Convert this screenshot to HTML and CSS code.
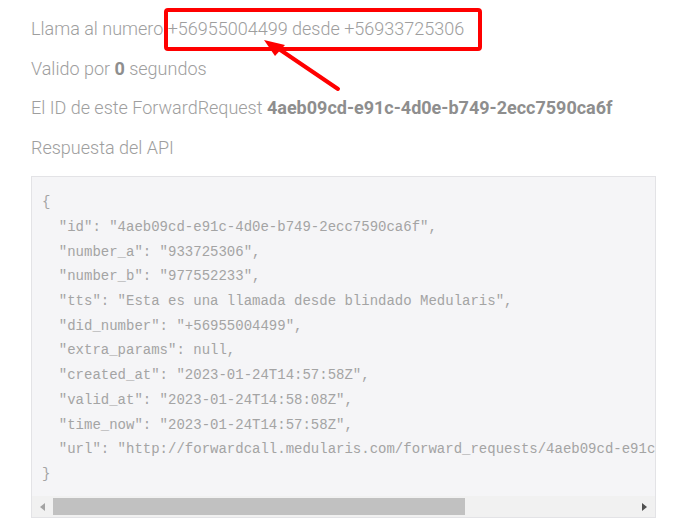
FILE: index.html
```html
<!DOCTYPE html>
<html>
<head>
<meta charset="utf-8">
<title>ForwardRequest</title>
<link rel="stylesheet" href="styles.css">
</head>
<body>
    <div class="info">
        <div class="line">Llama al numero +56955004499 desde +56933725306</div>
        <div class="line">Valido por <b>0</b> segundos</div>
        <div class="line">El ID de este ForwardRequest <b>4aeb09cd-e91c-4d0e-b749-2ecc7590ca6f</b></div>
        <div class="line">Respuesta del API</div>
    </div>

    <div class="response">
<pre class="json">{
  "id": "4aeb09cd-e91c-4d0e-b749-2ecc7590ca6f",
  "number_a": "933725306",
  "number_b": "977552233",
  "tts": "Esta es una llamada desde blindado Medularis",
  "did_number": "+56955004499",
  "extra_params": null,
  "created_at": "2023-01-24T14:57:58Z",
  "valid_at": "2023-01-24T14:58:08Z",
  "time_now": "2023-01-24T14:57:58Z",
  "url": "http://forwardcall.medularis.com/forward_requests/4aeb09cd-e91c-4d0e-b749-2ecc7590ca6f"
}</pre>
        <div class="scrollbar">
            <div class="arrow left"></div>
            <div class="track"><div class="thumb"></div></div>
            <div class="arrow right"></div>
        </div>
    </div>

    <!-- annotation drawn over the screenshot -->
    <svg class="mark" width="685" height="100" viewBox="0 0 685 100">
        <rect x="166" y="10" width="314" height="39" rx="2" fill="none" stroke="#ff0000" stroke-width="4"/>
        <line x1="338" y1="89" x2="276" y2="47" stroke="#ff0000" stroke-width="4" stroke-linecap="round"/>
        <polygon points="264,40 285,45 275,56" fill="#ff0000"/>
    </svg>
</body>
</html>
```

FILE: styles.css
```css
body {
    margin: 0;
    padding: 9px 29px 0 31px;
    background: #ffffff;
    font-family: Roboto, "Noto Sans", sans-serif;
    font-weight: 300;
    font-size: 18px;
    color: #9e9e9e;
}

.info .line {
    height: 39.7px;
    line-height: 39.7px;
    white-space: nowrap;
}

.info b {
    font-weight: 700;
    color: #8e8e8e;
}

.response {
    margin-top: 8px;
    width: 623px;
    border: 1px solid #e3e3e6;
    background: #f5f5f7;
}

.json {
    margin: 0;
    padding: 13.5px 0 9.5px 10px;
    overflow: hidden;
    white-space: pre;
    font-family: "Liberation Mono", "DejaVu Sans Mono", monospace;
    font-size: 14px;
    line-height: 24.7px;
    color: #a4a4a4;
}

.scrollbar {
    display: flex;
    align-items: center;
    height: 21px;
    background: #f1f1f1;
}

.scrollbar .arrow {
    width: 21px;
    height: 21px;
    display: flex;
    align-items: center;
    justify-content: center;
}

.scrollbar .arrow::before {
    content: "";
    border-top: 4.5px solid transparent;
    border-bottom: 4.5px solid transparent;
}

.scrollbar .left::before {
    border-right: 5px solid #a3a3a3;
}

.scrollbar .right::before {
    border-left: 5px solid #505050;
}

.track {
    flex: 1;
    height: 17px;
}

.thumb {
    width: 412px;
    height: 17px;
    background: #c1c1c1;
}

.mark {
    position: absolute;
    left: 0;
    top: 0;
}
```
